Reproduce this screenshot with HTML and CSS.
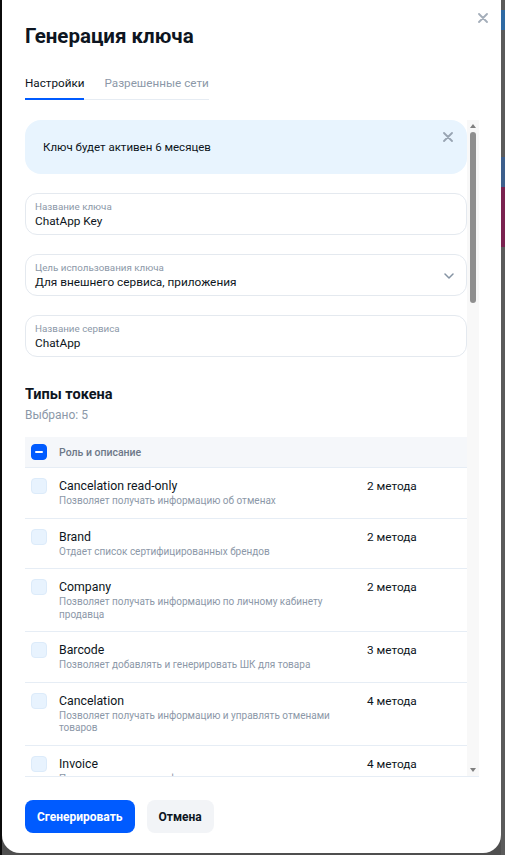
FILE: index.html
```html
<!DOCTYPE html>
<html>
<head>
    <title>Генерация ключа</title>
    <link rel="stylesheet" href="styles.css">
</head>
<body>
    <div class="modal">
        <button class="modal-close" aria-label="Закрыть">
            <svg width="10" height="10" viewBox="0 0 10 10"><path d="M1 1L9 9M9 1L1 9" stroke="currentColor" stroke-width="1.8" stroke-linecap="round"/></svg>
        </button>
        <h1 class="modal-title">Генерация ключа</h1>
        <div class="tabs">
            <span class="tab active">Настройки</span>
            <span class="tab">Разрешенные сети</span>
        </div>

        <div class="scroll-box">
            <div class="scroll">
                <div class="alert">
                    <span>Ключ будет активен 6 месяцев</span>
                    <svg class="alert-close" width="10" height="10" viewBox="0 0 10 10"><path d="M1 1L9 9M9 1L1 9" stroke="currentColor" stroke-width="1.8" stroke-linecap="round"/></svg>
                </div>

                <div class="field">
                    <span class="field-label">Название ключа</span>
                    <span class="field-value">ChatApp Key</span>
                </div>
                <div class="field field-select">
                    <div class="field-body">
                        <span class="field-label">Цель использования ключа</span>
                        <span class="field-value">Для внешнего сервиса, приложения</span>
                    </div>
                    <svg class="chevron" width="10" height="6" viewBox="0 0 10 6"><path d="M1 1L5 5L9 1" fill="none" stroke="currentColor" stroke-width="1.5" stroke-linecap="round" stroke-linejoin="round"/></svg>
                </div>
                <div class="field">
                    <span class="field-label">Название сервиса</span>
                    <span class="field-value">ChatApp</span>
                </div>

                <h2 class="section-title">Типы токена</h2>
                <div class="selected">Выбрано: 5</div>

                <div class="roles">
                    <div class="roles-head">
                        <span class="cb cb-mixed"></span>
                        <span>Роль и описание</span>
                    </div>
                    <div class="role">
                        <span class="cb"></span>
                        <div><div class="role-name">Cancelation read-only</div><div class="role-desc">Позволяет получать информацию об отменах</div></div>
                        <span class="role-count">2 метода</span>
                    </div>
                    <div class="role">
                        <span class="cb"></span>
                        <div><div class="role-name">Brand</div><div class="role-desc">Отдает список сертифицированных брендов</div></div>
                        <span class="role-count">2 метода</span>
                    </div>
                    <div class="role">
                        <span class="cb"></span>
                        <div><div class="role-name">Company</div><div class="role-desc">Позволяет получать информацию по личному кабинету продавца</div></div>
                        <span class="role-count">2 метода</span>
                    </div>
                    <div class="role">
                        <span class="cb"></span>
                        <div><div class="role-name">Barcode</div><div class="role-desc">Позволяет добавлять и генерировать ШК для товара</div></div>
                        <span class="role-count">3 метода</span>
                    </div>
                    <div class="role">
                        <span class="cb"></span>
                        <div><div class="role-name">Cancelation</div><div class="role-desc">Позволяет получать информацию и управлять отменами товаров</div></div>
                        <span class="role-count">4 метода</span>
                    </div>
                    <div class="role">
                        <span class="cb"></span>
                        <div><div class="role-name">Invoice</div><div class="role-desc">Позволяет получать информацию и загружать счета</div></div>
                        <span class="role-count">4 метода</span>
                    </div>
                </div>
            </div>

            <div class="scrollbar">
                <span class="scroll-arrow up"></span>
                <div class="scroll-track"><span class="scroll-thumb"></span></div>
                <span class="scroll-arrow down"></span>
            </div>
        </div>

        <div class="footer">
            <button class="btn btn-primary">Сгенерировать</button>
            <button class="btn btn-secondary">Отмена</button>
        </div>
    </div>
</body>
</html>
```

FILE: styles.css
```css
* {
    box-sizing: border-box;
}
body {
    margin: 0;
    height: 855px;
    overflow: hidden;
    font-family: Roboto, "Noto Sans", sans-serif;
    color: #0d1521;
    background:
        linear-gradient(#5b5b5b 0 10px, #2f6aa3 10px 30px, #5b5b5b 30px 157px, #3d5f8c 157px 187px, #7a2250 187px 247px, #5b5b5b 247px) right top / 4px 100% no-repeat,
        linear-gradient(to right, #0b0b0b 0 2px, #4f4f4f 2px);
}
.modal {
    position: relative;
    display: flex;
    flex-direction: column;
    width: 499px;
    height: 853px;
    margin-left: 2px;
    padding: 22px 22px 0 23px;
    background-color: #fff;
    border-radius: 0 0 18px 18px;
}
.modal-close {
    position: absolute;
    top: 13px;
    right: 13px;
    width: 10px;
    height: 10px;
    padding: 0;
    border: none;
    background: none;
    color: #a3adb9;
    display: flex;
}
.modal-title {
    margin: 0;
    font-size: 20.5px;
    line-height: 28px;
    font-weight: 700;
}
.tabs {
    align-self: flex-start;
    display: flex;
    gap: 20px;
    margin-top: 24px;
    box-shadow: inset 0 -1px 0 #e6ecf3;
}
.tab {
    font-size: 11.7px;
    line-height: 18px;
    padding-bottom: 6px;
    border-bottom: 2px solid transparent;
    color: #8c98a8;
}
.tab.active {
    color: #0d1521;
    border-bottom-color: #005bff;
}

.scroll-box {
    flex: 1;
    min-height: 0;
    display: flex;
    margin-top: 20px;
    border-bottom: 1px solid #e6edf5;
}
.scroll {
    flex: 1;
    min-width: 0;
    overflow: hidden;
}
.scrollbar {
    width: 12px;
    display: flex;
    flex-direction: column;
    background-color: #f8f8f8;
}
.scroll-arrow {
    height: 12px;
    display: flex;
    align-items: center;
    justify-content: center;
}
.scroll-arrow::before {
    content: "";
    border-left: 3.5px solid transparent;
    border-right: 3.5px solid transparent;
}
.scroll-arrow.up::before {
    border-bottom: 4px solid #7f7f7f;
}
.scroll-arrow.down::before {
    border-top: 4px solid #7f7f7f;
}
.scroll-track {
    flex: 1;
    padding: 0 3px;
}
.scroll-thumb {
    display: block;
    height: 171px;
    border-radius: 3px;
    background-color: #8f8f8f;
}

.alert {
    display: flex;
    align-items: center;
    justify-content: space-between;
    height: 54px;
    padding: 0 14px 0 18px;
    border-radius: 16px;
    background-color: #e8f4fe;
    font-size: 11.5px;
}
.alert-close {
    align-self: flex-start;
    margin-top: 12px;
    color: #98a4b2;
}

.field {
    display: flex;
    flex-direction: column;
    margin-top: 19px;
    padding: 6px 9px 5px;
    border: 1px solid #e4e9ef;
    border-radius: 12px;
}
.field-select {
    flex-direction: row;
    align-items: center;
    justify-content: space-between;
    padding-right: 12px;
}
.field-body {
    display: flex;
    flex-direction: column;
}
.field-label {
    font-size: 9.8px;
    line-height: 13px;
    color: #8c98a8;
}
.field-value {
    font-size: 11.8px;
    line-height: 16px;
}
.chevron {
    color: #8593a3;
}

.section-title {
    margin: 28px 0 0;
    font-size: 14.5px;
    line-height: 20px;
    font-weight: 700;
}
.selected {
    margin-top: 2px;
    font-size: 12px;
    line-height: 16px;
    color: #8c98a8;
}

.roles {
    margin-top: 14px;
}
.roles-head {
    display: flex;
    align-items: center;
    gap: 12px;
    height: 31px;
    padding: 0 6px;
    background-color: #f5f7fa;
    border-bottom: 1px solid #e6edf5;
    font-size: 10.5px;
    font-weight: 500;
    color: #6d7888;
}
.role {
    display: grid;
    grid-template-columns: 16px 296px 1fr;
    column-gap: 12px;
    padding: 10px 6px 10px;
    border-bottom: 1px solid #e6edf5;
}
.role-name {
    font-size: 12.3px;
    line-height: 17px;
}
.role-desc {
    font-size: 10px;
    line-height: 12.5px;
    color: #8c98a8;
}
.role-count {
    font-size: 11.8px;
    line-height: 17px;
}
.cb {
    width: 16px;
    height: 16px;
    border-radius: 4px;
    background-color: #e8f3fe;
    border: 1px solid #dcebfa;
}
.cb-mixed {
    position: relative;
    background-color: #005bff;
    border-color: #005bff;
}
.cb-mixed::after {
    content: "";
    position: absolute;
    left: 3px;
    top: 6px;
    width: 8px;
    height: 2px;
    border-radius: 1px;
    background-color: #fff;
}

.footer {
    display: flex;
    gap: 12px;
    height: 76px;
    padding-top: 23px;
}
.btn {
    height: 33px;
    padding: 0 12px;
    border: none;
    border-radius: 8px;
    font-family: inherit;
    font-size: 12px;
    font-weight: 700;
}
.btn-primary {
    background-color: #005bff;
    color: #fff;
}
.btn-secondary {
    background-color: #f2f4f7;
    color: #0d1521;
}
```
